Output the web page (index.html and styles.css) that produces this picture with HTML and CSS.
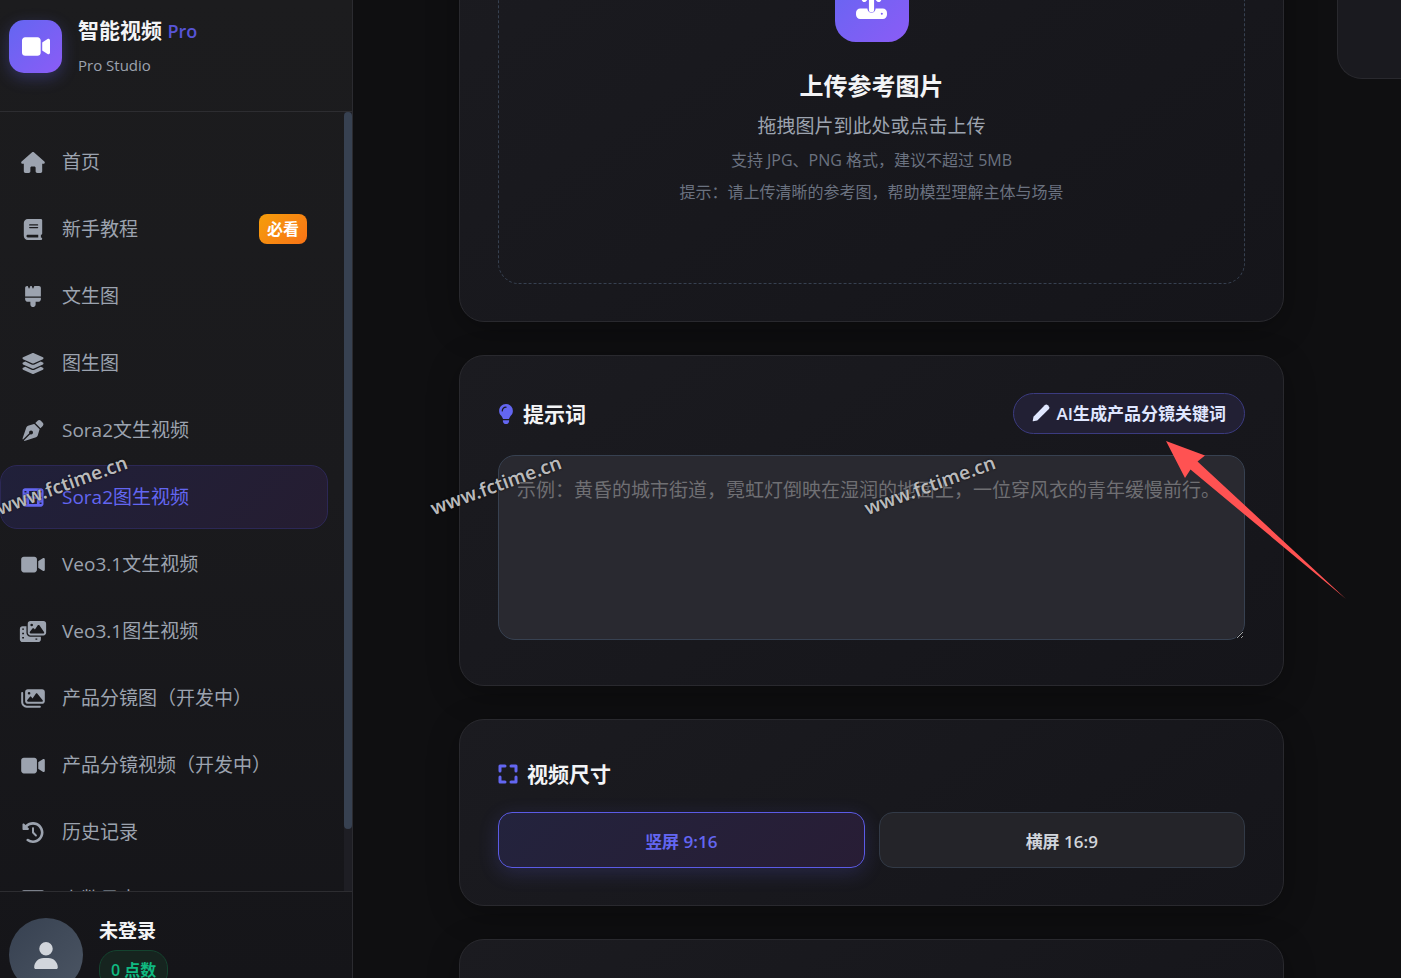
FILE: index.html
```
<!DOCTYPE html>
<html lang="zh-CN">
<head>
  <meta charset="UTF-8" />
  <meta name="viewport" content="width=device-width, initial-scale=1.0"/>
  <title>智能视频 Pro</title>
  <link rel="stylesheet" href="styles.css">
</head>
<body>
  <!-- Shared icons -->
  <svg class="sprite" width="0" height="0" aria-hidden="true">
    <symbol id="i-video" viewBox="0 0 576 512"><path d="M0 128C0 92.7 28.7 64 64 64H320c35.3 0 64 28.7 64 64V384c0 35.3-28.7 64-64 64H64c-35.3 0-64-28.7-64-64V128zM559.1 99.8c10.4 5.6 16.9 16.4 16.9 28.2V384c0 11.8-6.5 22.6-16.9 28.2s-23 5-32.9-1.6l-96-64L416 337.1V320 192 174.9l14.2-9.5 96-64c9.8-6.5 22.4-7.2 32.9-1.6z"/></symbol>
  </svg>

  <div class="app">
    <!-- Sidebar -->
    <aside class="sidebar">
      <header class="brand">
        <div class="brand-logo"><svg class="icon"><use href="#i-video"/></svg></div>
        <div class="brand-text">
          <h1>智能视频 <span>Pro</span></h1>
          <p>Pro Studio</p>
        </div>
      </header>

      <div class="nav-wrap">
        <nav class="nav">
          <a href="#" class="nav-item">
            <svg class="icon" viewBox="0 0 576 512"><path d="M575.8 255.5c0 18-15 32.1-32 32.1h-32l.7 160.2c0 2.7-.2 5.4-.5 8.1V472c0 22.1-17.9 40-40 40H456c-1.1 0-2.2 0-3.3-.1c-1.4 .1-2.8 .1-4.2 .1H416 392c-22.1 0-40-17.9-40-40V448 384c0-17.7-14.3-32-32-32H256c-17.7 0-32 14.3-32 32v64 24c0 22.1-17.9 40-40 40H160 128.1c-1.5 0-3-.1-4.5-.2c-1.2 .1-2.4 .2-3.6 .2H104c-22.1 0-40-17.9-40-40V360c0-.9 0-1.9 .1-2.8V287.6H32c-18 0-32-14-32-32.1c0-9 3-17 10-24L266.4 8c7-7 15-8 22-8s15 2 21 7L564.8 231.5c8 7 12 15 11 24z"/></svg>
            <span>首页</span>
          </a>
          <a href="#" class="nav-item">
            <svg class="icon" viewBox="0 0 448 512"><path d="M96 0C43 0 0 43 0 96V416c0 53 43 96 96 96H384h32c17.7 0 32-14.3 32-32s-14.3-32-32-32V384c17.7 0 32-14.3 32-32V32c0-17.7-14.3-32-32-32H384 96zm0 384H352v64H96c-17.7 0-32-14.3-32-32s14.3-32 32-32zm32-240c0-8.8 7.2-16 16-16H336c8.8 0 16 7.2 16 16s-7.2 16-16 16H144c-8.8 0-16-7.2-16-16zm16 48H336c8.8 0 16 7.2 16 16s-7.2 16-16 16H144c-8.8 0-16-7.2-16-16s7.2-16 16-16z"/></svg>
            <span>新手教程</span>
            <span class="tag">必看</span>
          </a>
          <a href="#" class="nav-item">
            <svg class="icon" viewBox="0 0 384 512"><path d="M162.4 6c-1.5-3.6-5-6-8.9-6h-19c-3.9 0-7.5 2.4-8.9 6L104.9 57.7c-3.2 8-14.6 8-17.8 0L66.4 6c-1.5-3.6-5-6-8.9-6H48C21.5 0 0 21.5 0 48V256H384V48c0-26.5-21.5-48-48-48H230.5c-3.9 0-7.5 2.4-8.9 6L200.9 57.7c-3.2 8-14.6 8-17.8 0L162.4 6zM0 288v32c0 35.3 28.7 64 64 64h64v64c0 35.3 28.7 64 64 64s64-28.7 64-64V384h64c35.3 0 64-28.7 64-64V288H0z"/></svg>
            <span>文生图</span>
          </a>
          <a href="#" class="nav-item">
            <svg class="icon" viewBox="0 0 576 512"><path d="M264.5 5.2c14.9-6.9 32.1-6.9 47 0l218.6 101c8.5 3.9 13.9 12.4 13.9 21.8s-5.4 17.9-13.9 21.8l-218.6 101c-14.9 6.9-32.1 6.9-47 0L45.9 149.8C37.4 145.8 32 137.3 32 128s5.4-17.9 13.9-21.8L264.5 5.2zM476.9 209.6l53.2 24.6c8.5 3.9 13.9 12.4 13.9 21.8s-5.4 17.9-13.9 21.8l-218.6 101c-14.9 6.9-32.1 6.9-47 0L45.9 277.8C37.4 273.8 32 265.3 32 256s5.4-17.9 13.9-21.8l53.2-24.6 152 70.2c23.4 10.8 50.4 10.8 73.8 0l152-70.2zm-152 198.2l152-70.2 53.2 24.6c8.5 3.9 13.9 12.4 13.9 21.8s-5.4 17.9-13.9 21.8l-218.6 101c-14.9 6.9-32.1 6.9-47 0L45.9 405.8C37.4 401.8 32 393.3 32 384s5.4-17.9 13.9-21.8l53.2-24.6 152 70.2c23.4 10.8 50.4 10.8 73.8 0z"/></svg>
            <span>图生图</span>
          </a>
          <a href="#" class="nav-item">
            <svg class="icon" viewBox="0 0 512 512"><path d="M368.4 18.3L312.7 74.1 437.9 199.3l55.7-55.7c21.9-21.9 21.9-57.3 0-79.2L447.6 18.3c-21.9-21.9-57.3-21.9-79.2 0zM288 94.6l-9.2 2.8L134.7 140.6c-19.9 6-35.7 21.2-42.3 41L3.8 445.8c-3.8 11.3-1 23.9 7.3 32.4L164.7 324.7c-3-6.3-4.7-13.3-4.7-20.7c0-26.5 21.5-48 48-48s48 21.5 48 48s-21.5 48-48 48c-7.4 0-14.4-1.7-20.7-4.7L33.7 500.9c8.6 8.3 21.1 11.2 32.4 7.3l264.3-88.6c19.7-6.6 35-22.4 41-42.3l43.2-144.1 2.8-9.2L288 94.6z"/></svg>
            <span>Sora2文生视频</span>
          </a>
          <a href="#" class="nav-item active">
            <svg class="icon" viewBox="0 0 512 512"><path fill-rule="evenodd" d="M64 32H448c35 0 64 29 64 64V416c0 35-29 64-64 64H64c-35 0-64-29-64-64V96C0 61 29 32 64 32zM48 96v40h48V96zM48 236v40h48v-40zM48 376v40h48v-40zM416 96v40h48V96zM416 236v40h48v-40zM416 376v40h48v-40zM160 96V224H352V96zM160 288V416H352V288z"/></svg>
            <span>Sora2图生视频</span>
          </a>
          <a href="#" class="nav-item">
            <svg class="icon"><use href="#i-video"/></svg>
            <span>Veo3.1文生视频</span>
          </a>
          <a href="#" class="nav-item">
            <svg class="icon" viewBox="0 0 640 512"><path fill-rule="evenodd" d="M256 0H576c35 0 64 29 64 64V288c0 35-29 64-64 64H256c-35 0-64-29-64-64V64C192 29 221 0 256 0zM476 106c-10-14-30-14-40 0L366 210 345 184c-9-12-28-12-38 0L244 263c-12 15-1 41 19 41H568c20 0 31-22 20-38zM288 64a32 32 0 1 0 0 64 32 32 0 1 0 0-64z"/><path fill-rule="evenodd" d="M64 128H160V288c0 53 43 96 96 96H512V448c0 35-29 64-64 64H64c-35 0-64-29-64-64V192C0 157 29 128 64 128zM56 180v36h44v-36zM56 284v36h44v-36zM56 388v36h44v-36zM380 424v36h44v-36z"/></svg>
            <span>Veo3.1图生视频</span>
          </a>
          <a href="#" class="nav-item">
            <svg class="icon" viewBox="0 0 576 512"><path fill-rule="evenodd" d="M160 32H512c35 0 64 29 64 64V320c0 35-29 64-64 64H160c-35 0-64-29-64-64V96C96 61 125 32 160 32zM396 138c-10-14-30-14-40 0L276 254 247 218c-9-12-28-12-38 0L149 294c-12 15-1 42 19 42H504c20 0 31-22 20-38zM192 96a32 32 0 1 0 0 64 32 32 0 1 0 0-64z"/><path d="M48 120c0-32-48-32-48 0V344c0 75 61 136 136 136H456c32 0 32-48 0-48H136c-49 0-88-39-88-88z"/></svg>
            <span>产品分镜图（开发中）</span>
          </a>
          <a href="#" class="nav-item">
            <svg class="icon"><use href="#i-video"/></svg>
            <span>产品分镜视频（开发中）</span>
          </a>
          <a href="#" class="nav-item">
            <svg class="icon" viewBox="0 0 512 512"><path d="M75 75L41 41C25.9 25.9 0 36.6 0 57.9V168c0 13.3 10.7 24 24 24H134.1c21.4 0 32.1-25.9 17-41l-30.8-30.8C155 85.5 203 64 256 64c106 0 192 86 192 192s-86 192-192 192c-40.8 0-78.6-12.7-109.7-34.4c-14.5-10.1-34.4-6.6-44.6 7.9s-6.6 34.4 7.9 44.6C151.2 495 201.7 512 256 512c141.4 0 256-114.6 256-256S397.4 0 256 0C185.3 0 121.3 28.7 75 75zm181 53c-13.3 0-24 10.7-24 24V256c0 6.4 2.5 12.5 7 17l72 72c9.4 9.4 24.6 9.4 33.9 0s9.4-24.6 0-33.9l-65-65V152c0-13.3-10.7-24-24-24z"/></svg>
            <span>历史记录</span>
          </a>
          <a href="#" class="nav-item">
            <svg class="icon" viewBox="0 0 576 512"><path fill-rule="evenodd" d="M64 32H512c35 0 64 29 64 64V416c0 35-29 64-64 64H64c-35 0-64-29-64-64V96C0 61 29 32 64 32zM64 128v64H512v-64z"/></svg>
            <span>点数日志</span>
          </a>
        </nav>
        <div class="scrollbar"><div class="scrollbar-thumb"></div></div>
      </div>

      <footer class="user">
        <div class="avatar">
          <svg class="icon" viewBox="0 0 448 512"><path d="M224 256A128 128 0 1 0 224 0a128 128 0 1 0 0 256zm-45.7 48C79.8 304 0 383.8 0 482.3C0 498.7 13.3 512 29.7 512H418.3c16.4 0 29.7-13.3 29.7-29.7C448 383.8 368.2 304 269.7 304H178.3z"/></svg>
        </div>
        <div class="user-info">
          <strong>未登录</strong>
          <span class="points">0 点数</span>
        </div>
      </footer>
    </aside>

    <!-- Main content -->
    <main class="main">
      <div class="content">
        <div class="column">
          <section class="card">
            <div class="dropzone">
              <div class="upload-icon">
                <svg class="icon" viewBox="0 0 32 32">
                  <path d="M16 20V4M9 10l7-7 7 7" fill="none" stroke="currentColor" stroke-width="5" stroke-linecap="round" stroke-linejoin="round"/>
                  <path fill-rule="evenodd" d="M5 19h7a4 4 0 0 0 8 0h7a4 4 0 0 1 4 4v2a4 4 0 0 1-4 4H5a4 4 0 0 1-4-4v-2a4 4 0 0 1 4-4zM26 23a1 1 0 1 0 0 2 1 1 0 1 0 0-2z"/>
                </svg>
              </div>
              <h2>上传参考图片</h2>
              <p class="lead">拖拽图片到此处或点击上传</p>
              <p class="note">支持 JPG、PNG 格式，建议不超过 5MB</p>
              <p class="note">提示：请上传清晰的参考图，帮助模型理解主体与场景</p>
            </div>
          </section>

          <section class="card">
            <div class="prompt-head">
              <label class="card-title" for="prompt">
                <svg class="icon bulb" viewBox="0 0 384 512"><path fill-rule="evenodd" d="M192 0C90 0 16 78 16 176c0 44 16 84 43 115 20 23 46 62 57 93h152c11-31 37-70 57-93 27-31 43-71 43-115C368 78 294 0 192 0zM112 176c0 22-32 22-32 0 0-62 50-112 112-112 22 0 22 32 0 32-44 0-80 36-80 80zM112 416v16c0 44 36 80 80 80s80-36 80-80v-16z"/></svg>
                提示词
              </label>
              <button type="button" class="ai-btn">
                <svg class="icon" viewBox="0 0 16 16"><path d="M11.3 1.2a2 2 0 0 1 2.8 0l.7.7a2 2 0 0 1 0 2.800L4.700 14.700 1 15.400a.4.4 0 0 1-.4-.4L1.300 11.300z"/></svg>
                AI生成产品分镜关键词
              </button>
            </div>
            <textarea id="prompt" placeholder="示例：黄昏的城市街道，霓虹灯倒映在湿润的地面上，一位穿风衣的青年缓慢前行。"></textarea>
          </section>

          <section class="card">
            <h3 class="card-title">
              <svg class="icon" viewBox="0 0 20 20"><path d="M2 7V2h5M13 2h5v5M18 13v5h-5M7 18H2v-5" fill="none" stroke="currentColor" stroke-width="3" stroke-linecap="round" stroke-linejoin="round"/></svg>
              视频尺寸
            </h3>
            <div class="sizes">
              <button type="button" class="size-btn selected">竖屏 9:16</button>
              <button type="button" class="size-btn">横屏 16:9</button>
            </div>
          </section>

          <section class="card next-card"></section>
        </div>

        <aside class="side-panel"></aside>
      </div>
    </main>
  </div>

  <!-- Overlays -->
  <svg class="pointer" viewBox="0 0 182 160" aria-hidden="true"><path d="M1 1L40 15.500 32.500 21.500 181 159 25.500 29.500 20 38z"/></svg>
  <span class="watermark mark-1">www.fctime.cn</span>
  <span class="watermark mark-2">www.fctime.cn</span>
  <span class="watermark mark-3">www.fctime.cn</span>
</body>
</html>
```
FILE: styles.css
```
* {
  box-sizing: border-box;
}

body {
  margin: 0;
  height: 100vh;
  overflow: hidden;
  position: relative;
  background-color: #0f0f11;
  color: #f3f4f6;
  font-family: "Open Sans", "Noto Sans CJK SC", sans-serif;
  font-size: 19px;
}

h1, h2, h3, p {
  margin: 0;
}

button, textarea {
  font-family: inherit;
}

.sprite {
  position: absolute;
}

.icon {
  fill: currentColor;
  flex-shrink: 0;
}

.app {
  display: flex;
  height: 100vh;
}

/* Sidebar */
.sidebar {
  display: flex;
  flex-direction: column;
  width: 353px;
  flex-shrink: 0;
  background: linear-gradient(180deg, #1c1c1e 0%, #1a1a1d 50%, #151519 100%);
  border-right: 1px solid #2b2b30;
}

.brand {
  display: flex;
  gap: 16px;
  height: 112px;
  padding: 13px 9px;
  border-bottom: 1px solid #2d2d31;
  flex-shrink: 0;
}

.brand-logo {
  display: flex;
  align-items: center;
  justify-content: center;
  width: 53px;
  height: 53px;
  margin-top: 7px;
  border-radius: 15px;
  background: linear-gradient(135deg, #6366f1, #8b5cf6);
  box-shadow: 0 5px 16px rgba(99, 102, 241, 0.3);
  color: #ffffff;
}

.brand-logo .icon {
  width: 28px;
  height: 25px;
}

.brand h1 {
  font-size: 21px;
  line-height: 34px;
  font-weight: 700;
}

.brand h1 span {
  font-size: 18px;
  font-weight: 600;
  color: #5754d6;
}

.brand p {
  margin-top: 3px;
  font-size: 15px;
  line-height: 28px;
  color: #9ca3af;
}

.nav-wrap {
  display: flex;
  flex: 1;
  min-height: 0;
}

.nav {
  display: flex;
  flex-direction: column;
  gap: 3px;
  flex: 1;
  padding: 18px 16px 0 0;
  overflow: hidden;
}

.nav-item {
  display: flex;
  align-items: center;
  gap: 15px;
  height: 64px;
  padding: 0 20px 0 18px;
  border: 1px solid transparent;
  border-radius: 17px;
  flex-shrink: 0;
  color: #9ca3af;
  text-decoration: none;
  line-height: 28px;
}

.nav-item .icon {
  width: 28px;
  height: 21px;
}

.nav-item.active {
  color: #6366f1;
  background: linear-gradient(135deg, #20203a, #251d31);
  border-color: #2c2856;
}

.tag {
  margin-left: auto;
  padding: 0 8px;
  border-radius: 8px;
  background: linear-gradient(135deg, #f59e0b, #f97316);
  color: #ffffff;
  font-size: 16px;
  font-weight: 700;
  line-height: 30px;
}

.scrollbar {
  width: 8px;
  background-color: #1e1e24;
}

.scrollbar-thumb {
  height: 92%;
  border-radius: 4px;
  background-color: #374151;
}

.user {
  display: flex;
  gap: 16px;
  height: 87px;
  padding: 26px 9px 0;
  border-top: 1px solid #2d2d31;
  overflow: hidden;
  flex-shrink: 0;
}

.avatar {
  display: flex;
  align-items: center;
  justify-content: center;
  width: 74px;
  height: 74px;
  border-radius: 50%;
  flex-shrink: 0;
  background: linear-gradient(135deg, #374151, #4b5563);
  color: #d1d5db;
}

.avatar .icon {
  width: 24px;
  height: 27px;
}

.user-info {
  display: flex;
  flex-direction: column;
  align-items: flex-start;
  gap: 6px;
}

.user-info strong {
  line-height: 26px;
}

.points {
  padding: 0 11px;
  border: 1px solid #14432f;
  border-radius: 18px;
  background-color: #16241f;
  color: #10b981;
  font-size: 16px;
  font-weight: 600;
  line-height: 38px;
}

/* Main content */
.main {
  flex: 1;
  min-width: 0;
  overflow: hidden;
}

.content {
  display: grid;
  grid-template-columns: minmax(0, 1fr) 64px;
  gap: 53px;
  align-items: start;
  margin-top: -108px;
  padding-left: 106px;
}

.column {
  display: flex;
  flex-direction: column;
  gap: 33px;
}

.card {
  padding: 37px 38px;
  border: 1px solid #29292e;
  border-radius: 25px;
  background: linear-gradient(145deg, #1b1b20, #15151a);
  box-shadow: 0 8px 32px rgba(0, 0, 0, 0.3);
}

.dropzone {
  display: flex;
  flex-direction: column;
  align-items: center;
  padding: 37px 20px 79px;
  border: 1px dashed #374151;
  border-radius: 21px;
  text-align: center;
}

.upload-icon {
  display: flex;
  align-items: center;
  justify-content: center;
  width: 74px;
  height: 74px;
  border-radius: 21px;
  background: linear-gradient(135deg, #6366f1, #8b5cf6);
  color: #ffffff;
}

.upload-icon .icon {
  width: 33px;
  height: 33px;
}

.dropzone h2 {
  margin-top: 28px;
  font-size: 24px;
  line-height: 32px;
}

.lead {
  margin-top: 10px;
  line-height: 28px;
  color: #9ca3af;
}

.note {
  margin-top: 8px;
  font-size: 16px;
  line-height: 24px;
  color: #6b7280;
}

.card-title {
  display: flex;
  align-items: center;
  gap: 9px;
  font-size: 21px;
  font-weight: 700;
  line-height: 34px;
}

.card-title .icon {
  width: 20px;
  height: 20px;
  color: #6366f1;
}

.card-title .bulb {
  width: 16px;
}

.prompt-head {
  display: flex;
  align-items: center;
  justify-content: space-between;
  margin-bottom: 21px;
}

.ai-btn {
  display: flex;
  align-items: center;
  gap: 7px;
  height: 41px;
  padding: 0 18px 2px;
  border: 1px solid #3b3b80;
  border-radius: 21px;
  background-color: #222034;
  color: #e0e7ff;
  font-size: 17px;
  font-weight: 600;
}

.ai-btn .icon {
  width: 18px;
  height: 18px;
}

textarea {
  display: block;
  width: 100%;
  height: 185px;
  margin-bottom: 8px;
  padding: 19px 18px;
  border: 1px solid #374151;
  border-radius: 17px;
  background: #292930;
  color: #f3f4f6;
  font-size: 19px;
  line-height: 30px;
  resize: vertical;
}

textarea::placeholder {
  color: #6f6f73;
}

.sizes {
  display: grid;
  grid-template-columns: 1fr 1fr;
  gap: 14px;
  margin-top: 21px;
}

.size-btn {
  height: 56px;
  border: 1px solid #323a47;
  border-radius: 14px;
  background-color: #242429;
  color: #d1d5db;
  font-size: 17px;
  font-weight: 600;
}

.size-btn.selected {
  border-color: #5b5be6;
  background: linear-gradient(135deg, #23233d, #281d35);
  box-shadow: 0 5px 20px rgba(99, 102, 241, 0.2);
  color: #6366f1;
}

.next-card {
  height: 200px;
}

.side-panel {
  height: 187px;
  border: 1px solid #29292e;
  border-right: 0;
  border-radius: 25px 0 0 25px;
  background-color: #1a1a1f;
}

/* Overlays */
.pointer {
  position: absolute;
  left: 1165px;
  top: 440px;
  width: 182px;
  height: 160px;
  fill: #ff5252;
  pointer-events: none;
}

.watermark {
  position: absolute;
  top: 471px;
  color: #b9b9bb;
  font-family: "Noto Sans", sans-serif;
  font-size: 19px;
  font-weight: 600;
  line-height: 28px;
  text-shadow: 0 0 2px #000000;
  transform: rotate(-20deg);
  pointer-events: none;
}

.mark-1 {
  left: -7px;
}

.mark-2 {
  left: 427px;
}

.mark-3 {
  left: 861px;
}
```
